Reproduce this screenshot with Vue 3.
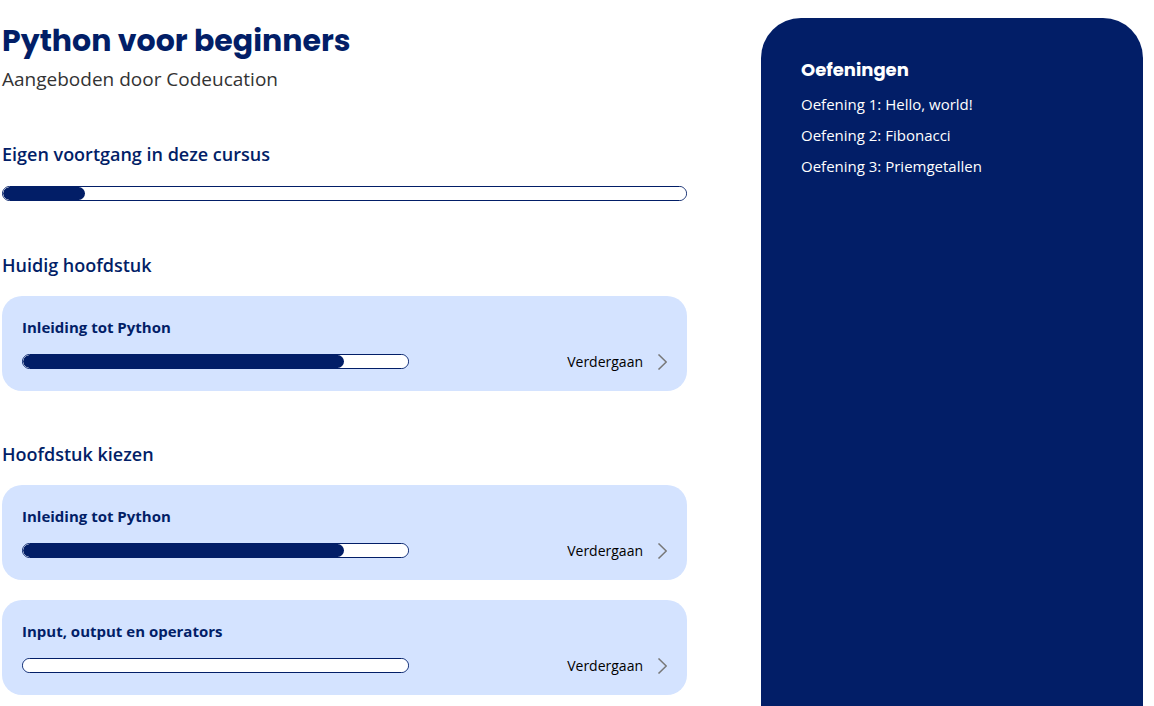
<script setup>
const course = {
  title: 'Python voor beginners',
  provider: 'Aangeboden door Codeucation',
  progress: 12
}

const intro = { id: 'intro', title: 'Inleiding tot Python', progress: 83.4 }
const io = { id: 'io', title: 'Input, output en operators', progress: 0 }

const sections = [
  { id: 'huidig', title: 'Huidig hoofdstuk', chapters: [intro] },
  { id: 'kiezen', title: 'Hoofdstuk kiezen', chapters: [intro, io] }
]

const exercises = [
  'Oefening 1: Hello, world!',
  'Oefening 2: Fibonacci',
  'Oefening 3: Priemgetallen'
]
</script>

<template>
  <div class="page">
    <main class="course">
      <header class="course-header">
        <h1>{{ course.title }}</h1>
        <p>{{ course.provider }}</p>
      </header>

      <section class="overall">
        <h2 id="overall-title">Eigen voortgang in deze cursus</h2>
        <progress class="bar" aria-labelledby="overall-title" :value="course.progress" max="100"></progress>
      </section>

      <section v-for="section in sections" :key="section.id" class="section">
        <h2>{{ section.title }}</h2>
        <div class="cards">
          <article v-for="chapter in section.chapters" :key="chapter.id" class="card">
            <h3 :id="`${section.id}-${chapter.id}`">{{ chapter.title }}</h3>
            <div class="card-row">
              <progress
                class="bar"
                :aria-labelledby="`${section.id}-${chapter.id}`"
                :value="chapter.progress"
                max="100"
              ></progress>
              <a class="continue" href="#">
                Verdergaan
                <svg class="chevron" viewBox="0 0 10 16" aria-hidden="true">
                  <path d="M1.5 0.5 L9.2 8 L1.5 15.5" />
                </svg>
              </a>
            </div>
          </article>
        </div>
      </section>
    </main>

    <aside class="exercises">
      <h2>Oefeningen</h2>
      <ul>
        <li v-for="exercise in exercises" :key="exercise">
          <a href="#">{{ exercise }}</a>
        </li>
      </ul>
    </aside>
  </div>
</template>

<style>
body {
  margin: 0;
  background: #ffffff;
}
</style>

<style scoped>
.page {
  --navy: #021e67;
  --sky: #d4e3ff;
  display: grid;
  grid-template-columns: 685fr 382fr;
  gap: 74px;
  box-sizing: border-box;
  min-height: 100vh;
  padding: 18px 11px 0 2px;
  font-family: "Segoe UI", "Open Sans", sans-serif;
  font-size: 15px;
}

h1,
h2,
h3,
p,
ul {
  margin: 0;
  padding: 0;
}

a {
  color: inherit;
  text-decoration: none;
}

.course {
  color: var(--navy);
}

.course-header {
  margin-bottom: 48px;
}

h1 {
  font-family: Poppins, Inter, sans-serif;
  font-size: 30px;
  font-weight: 700;
  line-height: 46px;
}

.course-header p {
  color: #333333;
  font-size: 19px;
  font-weight: 400;
  line-height: 30px;
}

.course h2 {
  margin-bottom: 19px;
  font-size: 18px;
  font-weight: 600;
  line-height: 24px;
}

.course .overall h2 {
  margin-bottom: 20px;
}

.overall {
  margin-bottom: 52px;
}

.section {
  margin-bottom: 51px;
}

.section:last-child {
  margin-bottom: 11px;
}

.bar {
  display: block;
  box-sizing: border-box;
  width: 100%;
  height: 15px;
  appearance: none;
  overflow: hidden;
  border: 1px solid var(--navy);
  border-radius: 8px;
  background: #ffffff;
}

.bar::-webkit-progress-bar {
  background: #ffffff;
}

.bar::-webkit-progress-value {
  border-radius: 8px;
  background: var(--navy);
}

.cards {
  display: grid;
  gap: 20px;
}

.card {
  padding: 20px 20px 22px;
  border-radius: 20px;
  background: var(--sky);
}

h3 {
  margin-bottom: 16px;
  font-size: 15px;
  font-weight: 700;
  line-height: 22px;
}

.card-row {
  display: flex;
  align-items: center;
  justify-content: space-between;
  height: 15px;
}

.card-row .bar {
  width: 60%;
}

.continue {
  display: flex;
  align-items: center;
  gap: 14px;
  color: #000000;
  font-size: 14px;
}

.chevron {
  width: 10px;
  height: 16px;
  fill: none;
  stroke: #777777;
  stroke-width: 1.5;
}

.exercises {
  padding: 40px;
  border-radius: 40px 40px 0 0;
  background: var(--navy);
  color: #ffffff;
}

.exercises h2 {
  margin-bottom: 7px;
  font-family: Poppins, Inter, sans-serif;
  font-size: 18px;
  font-weight: 700;
  line-height: 24px;
}

.exercises ul {
  list-style: none;
}

.exercises li {
  line-height: 31px;
}
</style>
